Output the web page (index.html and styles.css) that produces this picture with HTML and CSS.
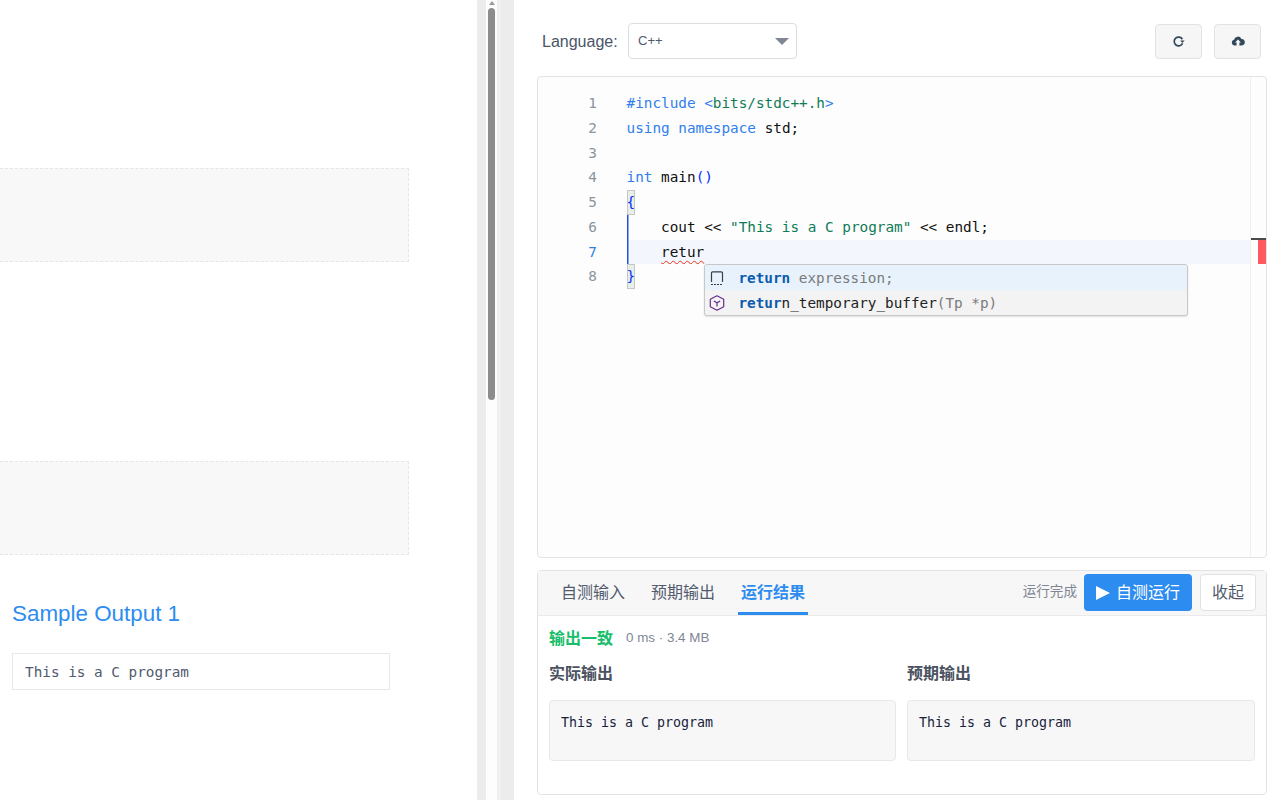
FILE: index.html
```html
<!DOCTYPE html>
<html lang="en">
<head>
  <meta charset="UTF-8" />
  <meta name="viewport" content="width=device-width, initial-scale=1.0"/>
  <title>Problem</title>
  <link rel="stylesheet" href="styles.css">
</head>
<body>

  <div class="page">
    <!-- Problem statement -->
    <div class="left-pane">
      <div class="sample-box first-box"></div>
      <div class="sample-box second-box"></div>
      <h3 class="sample-title">Sample Output 1</h3>
      <pre class="sample-output">This is a C program</pre>
    </div>

    <!-- Divider and page scrollbar -->
    <div class="splitter">
      <div class="strip"></div>
      <div class="scroll-track">
        <div class="scroll-arrow"></div>
        <div class="scroll-thumb"></div>
      </div>
      <div class="strip wide-strip"></div>
    </div>

    <div class="right-pane">
      <!-- Toolbar -->
      <div class="toolbar">
        <label class="lang-label">Language:</label>
        <div class="lang-select">
          <span>C++</span>
          <i class="select-arrow"></i>
        </div>
        <div class="tool-buttons">
          <button class="tool-button" aria-label="Reset">
            <svg width="13" height="13" viewBox="0 0 13 13"><path d="M10.4 4.2A4.4 4.4 0 1 0 10.6 8.4" fill="none" stroke="#33475b" stroke-width="1.7"/><path d="M8.2 5.6h4.4l-2.2 2.4z" fill="#33475b"/></svg>
          </button>
          <button class="tool-button" aria-label="Upload">
            <svg width="14" height="12" viewBox="0 0 14 12"><path d="M3.4 10.4A2.9 2.9 0 0 1 3 4.7 3.9 3.9 0 0 1 10.4 4a3.2 3.2 0 0 1 .3 6.4H8.4V7.6h1.5L7 4.6 4.1 7.6h1.5v2.8z" fill="#33475b"/></svg>
          </button>
        </div>
      </div>

      <!-- Code editor -->
      <div class="editor">
        <div class="code-area">
          <div class="code-line"><span class="line-num">1</span><code class="code-text"><span class="kw">#include &lt;</span><span class="str">bits/stdc++.h</span><span class="kw">&gt;</span></code></div>
          <div class="code-line"><span class="line-num">2</span><code class="code-text"><span class="kw">using namespace</span> std;</code></div>
          <div class="code-line"><span class="line-num">3</span><code class="code-text"></code></div>
          <div class="code-line"><span class="line-num">4</span><code class="code-text"><span class="kw">int</span> main<span class="paren">()</span></code></div>
          <div class="code-line"><span class="line-num">5</span><code class="code-text"><span class="bracket">{</span></code></div>
          <div class="code-line"><span class="line-num">6</span><code class="code-text guide">    cout &lt;&lt; <span class="str">"This is a C program"</span> &lt;&lt; endl;</code></div>
          <div class="code-line"><span class="line-num active-num">7</span><code class="code-text guide active-line">    <span class="squiggle">retur</span></code></div>
          <div class="code-line"><span class="line-num">8</span><code class="code-text"><span class="bracket">}</span></code></div>
        </div>
        <div class="ruler">
          <div class="ruler-cursor"></div>
          <div class="ruler-error"></div>
        </div>

        <!-- Autocomplete popup -->
        <div class="suggest">
          <div class="suggest-row selected">
            <svg class="suggest-icon" width="16" height="16" viewBox="0 0 16 16"><path d="M2.5 12V3a1.2 1.2 0 0 1 1.2-1.2h8.6A1.2 1.2 0 0 1 13.5 3v9" fill="none" stroke="#3a3f47" stroke-width="1.2"/><path d="M2 14.5h12" stroke="#3a3f47" stroke-width="1.2" stroke-dasharray="2 1"/></svg>
            <code><b>return</b> <span class="hint">expression;</span></code>
          </div>
          <div class="suggest-row">
            <svg class="suggest-icon" width="16" height="16" viewBox="0 0 16 16"><path d="M8 .8l6.7 3.4v7.6L8 15.2l-6.7-3.4V4.2z" fill="none" stroke="#652d90" stroke-width="1.2" stroke-linejoin="round"/><path d="M4.8 6L8 7.8 11.2 6M8 7.8v3.7" fill="none" stroke="#652d90" stroke-width="1.2"/></svg>
            <code><b>retur</b>n_temporary_buffer<span class="hint">(Tp *p)</span></code>
          </div>
        </div>
      </div>

      <!-- Run panel -->
      <div class="run-panel">
        <div class="tab-bar">
          <div class="tab">自测输入</div>
          <div class="tab">预期输出</div>
          <div class="tab active-tab">运行结果</div>
          <div class="tab-actions">
            <span class="run-status">运行完成</span>
            <button class="run-button">
              <svg width="14" height="16" viewBox="0 0 14 16"><path d="M0 1l14 7-14 7z" fill="#ffffff"/></svg>
              <span>自测运行</span>
            </button>
            <button class="fold-button">收起</button>
          </div>
        </div>
        <div class="run-body">
          <div class="verdict">
            <strong>输出一致</strong>
            <span>0 ms · 3.4 MB</span>
          </div>
          <div class="compare">
            <div class="compare-col">
              <h4>实际输出</h4>
              <pre>This is a C program</pre>
            </div>
            <div class="compare-col">
              <h4>预期输出</h4>
              <pre>This is a C program</pre>
            </div>
          </div>
        </div>
      </div>
    </div>
  </div>

</body>
</html>
```

FILE: styles.css
```css
:root {
  --accent-color: #2d8cf0;
  --border-color: #e3e3e3;
  --strip-color: #ececec;
  --text-dark: #515a6e;
  --mono: 'DejaVu Sans Mono', monospace;
  --sans: 'Liberation Sans', 'Noto Sans CJK SC', sans-serif;
}

* {
  box-sizing: border-box;
  margin: 0;
  padding: 0;
}

body {
  font-family: var(--sans);
  color: var(--text-dark);
  background: #ffffff;
  overflow: hidden;
}

.page {
  display: flex;
  height: 800px;
}

/* Left pane */

.left-pane {
  width: 477px;
  flex-shrink: 0;
  padding-top: 168px;
}

.sample-box {
  width: 409px;
  height: 94px;
  background: #f8f8f8;
  border: 1px dashed #e6e6e6;
  border-left: none;
}

.second-box {
  margin-top: 199px;
}

.sample-title {
  margin: 45px 0 0 12px;
  font-size: 22.4px;
  font-weight: 400;
  line-height: 28px;
  color: var(--accent-color);
}

.sample-output {
  width: 378px;
  height: 37px;
  margin: 25px 0 0 12px;
  padding: 0 12px;
  border: 1px solid #e8e8e8;
  font-family: var(--mono);
  font-size: 14.33px;
  line-height: 36px;
}

/* Splitter */

.splitter {
  display: flex;
  width: 37px;
  flex-shrink: 0;
}

.strip {
  width: 9px;
  background: var(--strip-color);
}

.wide-strip {
  width: 17px;
  background: linear-gradient(to right, #f0f0f0 4px, var(--strip-color) 4px);
}

.scroll-track {
  width: 11px;
  padding: 0 2px;
  background: #fdfdfd;
}

.scroll-arrow {
  width: 0;
  height: 0;
  margin: 1px auto 3px;
  border-left: 3px solid transparent;
  border-right: 3px solid transparent;
  border-bottom: 4px solid #9a9a9a;
}

.scroll-thumb {
  width: 7px;
  height: 392px;
  background: #8c8c8c;
  border-radius: 4px;
}

/* Right pane */

.right-pane {
  flex: 1;
  padding: 23px 13px 0 23px;
}

.toolbar {
  display: flex;
  align-items: center;
  height: 36px;
}

.lang-label {
  width: 75px;
  margin-left: 5px;
  padding-top: 2px;
  font-size: 16px;
  white-space: nowrap;
  color: #4a5568;
}

.lang-select {
  display: flex;
  align-items: center;
  justify-content: space-between;
  width: 169px;
  height: 36px;
  margin-left: 11px;
  padding: 0 7px 2px 9px;
  border: 1px solid #dcdee2;
  border-radius: 4px;
  font-size: 13px;
  color: #515a6e;
}

.select-arrow {
  width: 0;
  height: 0;
  margin-top: 2px;
  border-left: 7px solid transparent;
  border-right: 7px solid transparent;
  border-top: 7px solid #808695;
}

.tool-buttons {
  display: flex;
  gap: 12px;
  margin-left: auto;
  margin-right: 6px;
}

.tool-button {
  display: flex;
  align-items: center;
  justify-content: center;
  width: 47px;
  height: 35px;
  background: #f6f6f6;
  border: 1px solid #e2e2e2;
  border-radius: 4px;
}

/* Editor */

.editor {
  position: relative;
  display: flex;
  height: 482px;
  margin-top: 17px;
  background: #fdfdfd;
  border: 1px solid var(--border-color);
  border-radius: 4px;
}

.code-area {
  flex: 1;
  padding-top: 14px;
}

.code-line {
  display: flex;
  height: 24.75px;
  line-height: 24.75px;
}

.line-num {
  width: 59px;
  flex-shrink: 0;
  margin-right: 29.6px;
  text-align: right;
  font-family: var(--mono);
  font-size: 14.33px;
  color: #8b949e;
}

.line-num.active-num {
  color: #2d7fd8;
}

.code-text {
  flex: 1;
  font-family: var(--mono);
  font-size: 14.33px;
  color: #111111;
  white-space: pre;
}

.guide {
  box-shadow: inset 1.5px 0 0 #2450d8;
}

.active-line {
  background-color: #f3f7fd;
}

.kw {
  color: #2f80ed;
}

.str {
  color: #0f7b57;
}

.paren {
  color: #0431fa;
}

.bracket {
  display: inline-block;
  height: 24.75px;
  color: #0431fa;
  background: #eaeeea;
  outline: 1px solid #c4c8c4;
  outline-offset: -1px;
}

.squiggle {
  text-decoration: underline wavy #e8361c;
  text-decoration-thickness: 1.3px;
  text-underline-offset: 3px;
}

.ruler {
  position: relative;
  width: 16px;
  border-left: 1px solid #f0f0f0;
}

.ruler-cursor {
  position: absolute;
  top: 161px;
  left: 0;
  width: 100%;
  height: 2px;
  background: #4a4a4a;
}

.ruler-error {
  position: absolute;
  top: 163px;
  right: 0;
  width: 8px;
  height: 24px;
  background: #ff5a5f;
}

.suggest {
  position: absolute;
  top: 187px;
  left: 166px;
  width: 484px;
  background: #f3f3f3;
  border: 1px solid #c8c8c8;
  border-radius: 3px;
  box-shadow: 0 1px 2px rgba(0, 0, 0, 0.12);
  overflow: hidden;
}

.suggest-row {
  display: flex;
  align-items: center;
  height: 25px;
  padding-left: 33.4px;
  position: relative;
  font-size: 14.33px;
  color: #222222;
}

.suggest-row code {
  font-family: var(--mono);
  white-space: pre;
}

.suggest-row b {
  color: #0b5cad;
}

.suggest-row.selected {
  background: #e8f2fd;
}

.suggest-icon {
  position: absolute;
  left: 4px;
  top: 5px;
}

.hint {
  color: #7a7a7a;
}

/* Run panel */

.run-panel {
  height: 225px;
  margin-top: 12px;
  border: 1px solid var(--border-color);
  border-radius: 4px;
}

.tab-bar {
  display: flex;
  align-items: flex-end;
  height: 45px;
  padding-left: 20px;
  background: #f7f7f7;
  border-bottom: 1px solid #ebebeb;
}

.tab {
  height: 44px;
  margin-right: 20px;
  padding: 0 3px;
  font-size: 16px;
  line-height: 44px;
  color: var(--text-dark);
}

.tab.active-tab {
  color: var(--accent-color);
  font-weight: 700;
  border-bottom: 3px solid var(--accent-color);
}

.tab-actions {
  display: flex;
  align-items: center;
  align-self: flex-start;
  margin-top: 3px;
  margin-left: auto;
  margin-right: 10px;
}

.run-status {
  margin-right: 7px;
  margin-bottom: 5px;
  font-size: 13.6px;
  color: #808695;
}

.run-button {
  display: flex;
  align-items: center;
  justify-content: center;
  gap: 6px;
  width: 108px;
  height: 37px;
  background: var(--accent-color);
  color: #ffffff;
  border: none;
  border-radius: 4px;
  font-family: var(--sans);
  font-size: 16px;
}

.run-button span {
  padding-bottom: 4px;
}

.fold-button {
  width: 56px;
  height: 37px;
  margin-left: 8px;
  padding-bottom: 4px;
  background: #ffffff;
  color: var(--text-dark);
  border: 1px solid #dfe1e5;
  border-radius: 4px;
  font-family: var(--sans);
  font-size: 16px;
}

.run-body {
  padding: 10px 11px 0;
}

.verdict {
  display: flex;
  align-items: center;
  gap: 13px;
  height: 22px;
}

.verdict strong {
  font-size: 16px;
  color: #19be6b;
}

.verdict span {
  font-size: 13.4px;
  color: #808695;
}

.compare {
  display: grid;
  grid-template-columns: 347px 348px;
  gap: 11px;
  margin-top: 15px;
}

.compare-col h4 {
  font-size: 16px;
  line-height: 22px;
  color: #4a5160;
}

.compare-col pre {
  height: 61px;
  margin-top: 15px;
  padding: 13px 11px;
  background: #f7f7f7;
  border: 1px solid #e8e8e8;
  border-radius: 4px;
  font-family: var(--mono);
  font-size: 13.3px;
  line-height: 18px;
  color: #17233d;
}
```
